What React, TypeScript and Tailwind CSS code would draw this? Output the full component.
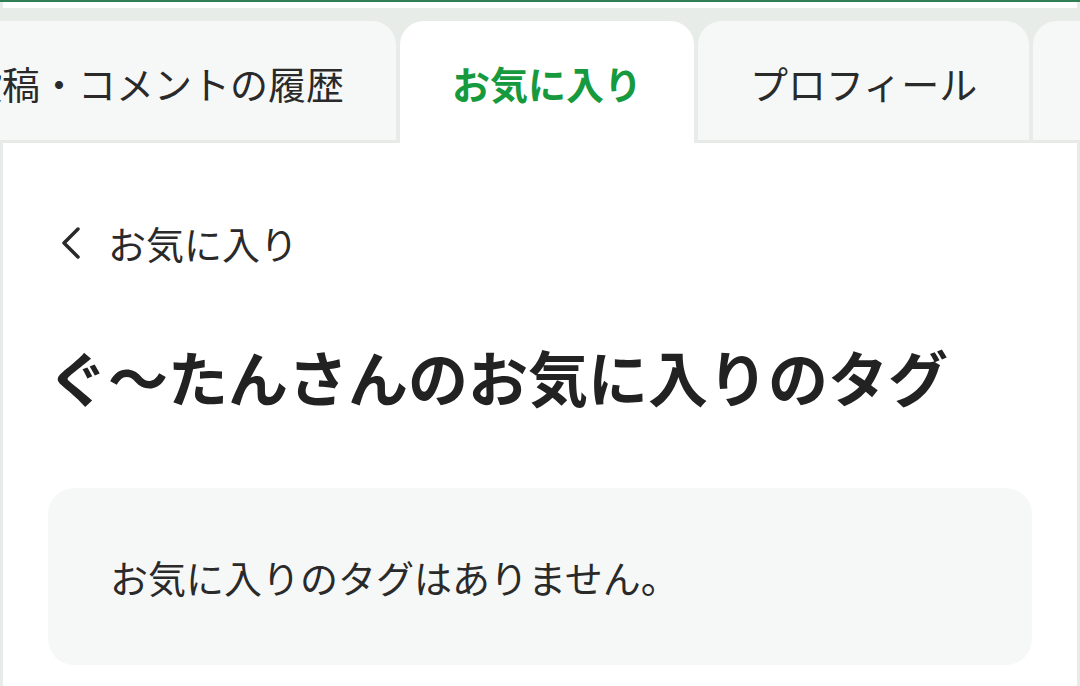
import React, { ReactElement } from 'react'

type Tab = {
  label: string
  active?: boolean
}

const tabs: Tab[] = [
  { label: '投稿・コメントの履歴' },
  { label: 'お気に入り', active: true },
  { label: 'プロフィール' },
  { label: 'フォロー' }
]

function TabBar(): ReactElement {
  return (
    <div className="overflow-hidden">
      <div className="flex gap-[4px] -ml-[88px] w-max">
        {tabs.map(tab =>
          tab.active ? (
            <div
              key={tab.label}
              className="h-[122px] px-[52px] flex items-center rounded-t-[24px] bg-white text-[38px] font-bold text-[#17993d]">
              {tab.label}
            </div>
          ) : (
            <div
              key={tab.label}
              className="h-[122px] px-[52px] pt-[3px] flex items-center rounded-t-[24px] bg-[#f6f8f7] border-b-[3px] border-[#e6ebe8] text-[38px] text-[#2a2a2a]">
              {tab.label}
            </div>
          )
        )}
      </div>
    </div>
  )
}

function BackIcon() {
  return (
    <svg width="24" height="34" viewBox="0 0 24 34" fill="none">
      <path
        d="M19 3 L5 17 L19 31"
        stroke="#2a2a2a"
        strokeWidth="3.5"
        strokeLinecap="round"
        strokeLinejoin="round"
      />
    </svg>
  )
}

export default function App(): ReactElement {
  return (
    <div
      className="w-[1080px] h-[686px] overflow-hidden bg-[#e7ece9]"
      style={{ fontFamily: '"Noto Sans CJK JP", "Noto Sans", sans-serif' }}>
      <div className="h-[2px] bg-[#2f7d53]" />
      <div className="h-[6px] mx-[3px] bg-white" />
      <div className="h-[13px]" />
      <TabBar />
      <div className="mx-[3px] h-[600px] bg-white px-[45px] pt-[72px]">
        <div className="flex items-center h-[55px] pl-[11px] gap-[25px] text-[38px] text-[#2a2a2a]">
          <BackIcon />
          <span>お気に入り</span>
        </div>
        <h1 className="mt-[66px] h-[80px] flex items-center text-[60px] font-bold text-[#222]">
          ぐ〜たんさんのお気に入りのタグ
        </h1>
        <div className="mt-[72px] h-[177px] rounded-[26px] bg-[#f6f8f7] px-[62px] flex items-center text-[38px] text-[#2a2a2a]">
          お気に入りのタグはありません。
        </div>
      </div>
    </div>
  )
}
